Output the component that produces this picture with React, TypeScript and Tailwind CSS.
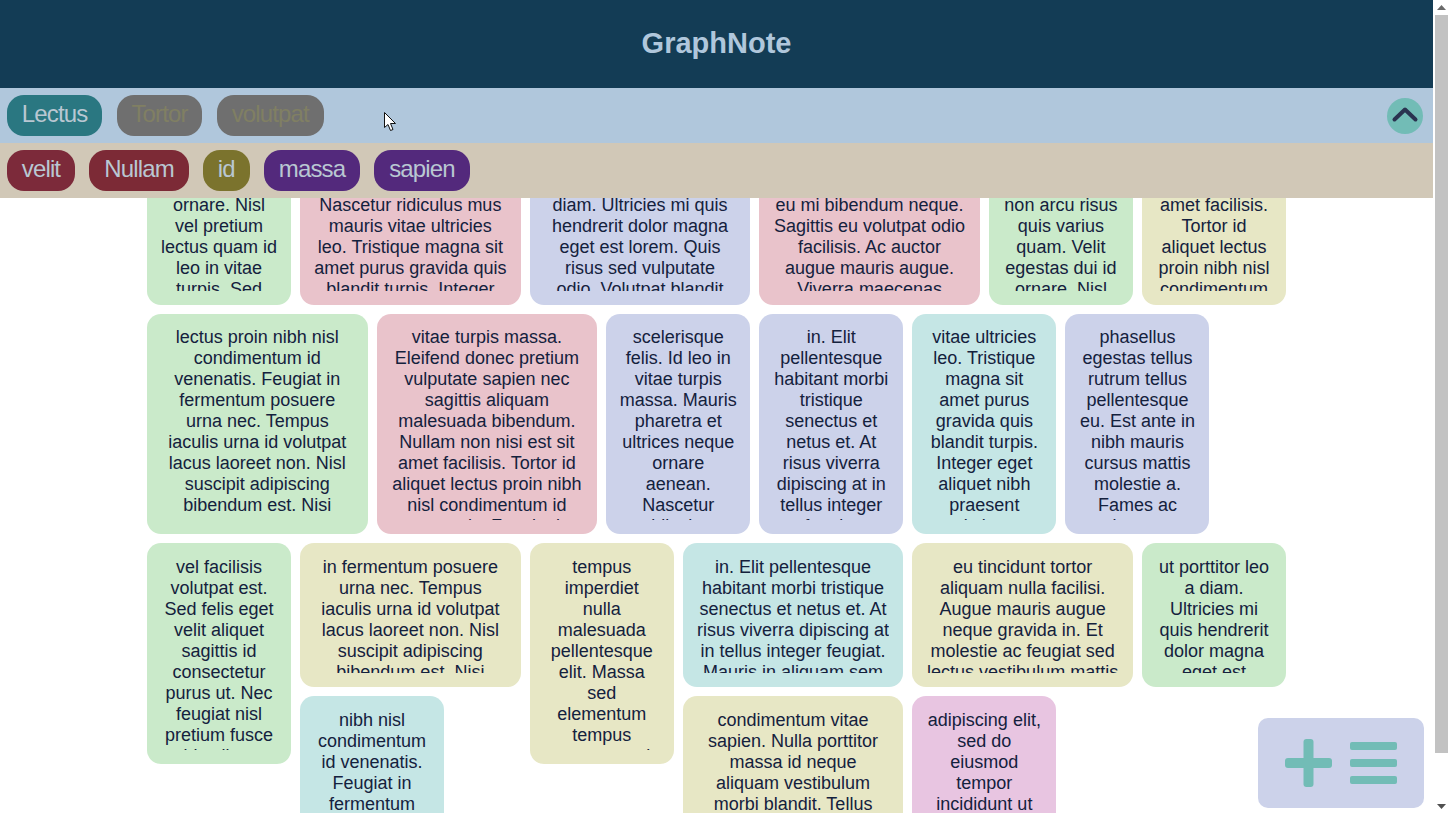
const sans = "font-['Liberation_Sans',Arial,sans-serif]"

const activeTags = [
    { label: "Lectus", cls: "bg-[#2a7781] text-[#b9c7d2]" },
    { label: "Tortor", cls: "bg-[#6f6f6f] text-[#807f63]" },
    { label: "volutpat", cls: "bg-[#6f6f6f] text-[#807f63]" },
]

const otherTags = [
    { label: "velit", cls: "bg-[#7c2a3a]" },
    { label: "Nullam", cls: "bg-[#7c2a36]" },
    { label: "id", cls: "bg-[#7b732d]" },
    { label: "massa", cls: "bg-[#53297c]" },
    { label: "sapien", cls: "bg-[#53297c]" },
]

const green = "bg-[#caeaca]"
const pink = "bg-[#e9c3cb]"
const lavender = "bg-[#ccd2ea]"
const beige = "bg-[#e7e7c5]"
const teal = "bg-[#c5e6e5]"
const magenta = "bg-[#e8c5e1]"

const small = "col-span-2 row-span-2"
const wide = "col-span-3 row-span-2"
const tall = "col-span-2 row-span-3"
const big = "col-span-3 row-span-3"

const notes = [
    { size: small, color: green, pad: "px-[14px]", text: "Volutpat lacus ornare. Nisl vel pretium lectus quam id leo in vitae turpis. Sed" },
    { size: wide, color: pink, pad: "px-[14px]", text: "neque ornare aenean. Nascetur ridiculus mus mauris vitae ultricies leo. Tristique magna sit amet purus gravida quis blandit turpis. Integer" },
    { size: wide, color: lavender, pad: "px-[14px]", text: "donec ut porttitor leo a diam. Ultricies mi quis hendrerit dolor magna eget est lorem. Quis risus sed vulputate odio. Volutpat blandit" },
    { size: wide, color: pink, pad: "px-[14px]", text: "pharetra massa ultricies eu mi bibendum neque. Sagittis eu volutpat odio facilisis. Ac auctor augue mauris augue. Viverra maecenas" },
    { size: small, color: green, pad: "px-[14px]", text: "Volutpat lacus non arcu risus quis varius quam. Velit egestas dui id ornare. Nisl" },
    { size: small, color: beige, pad: "px-[14px]", text: "nisi est sit amet facilisis. Tortor id aliquet lectus proin nibh nisl condimentum" },
    { size: big, color: green, pad: "px-[14px]", text: "lectus proin nibh nisl condimentum id venenatis. Feugiat in fermentum posuere urna nec. Tempus iaculis urna id volutpat lacus laoreet non. Nisl suscipit adipiscing bibendum est. Nisi" },
    { size: big, color: pink, pad: "px-[14px]", text: "vitae turpis massa. Eleifend donec pretium vulputate sapien nec sagittis aliquam malesuada bibendum. Nullam non nisi est sit amet facilisis. Tortor id aliquet lectus proin nibh nisl condimentum id venenatis. Feugiat in" },
    { size: tall, color: lavender, pad: "px-[12px]", text: "scelerisque felis. Id leo in vitae turpis massa. Mauris pharetra et ultrices neque ornare aenean. Nascetur ridiculus" },
    { size: tall, color: lavender, pad: "px-[14px]", text: "in. Elit pellentesque habitant morbi tristique senectus et netus et. At risus viverra dipiscing at in tellus integer feugiat" },
    { size: tall, color: teal, pad: "px-[14px]", text: "vitae ultricies leo. Tristique magna sit amet purus gravida quis blandit turpis. Integer eget aliquet nibh praesent tristique" },
    { size: tall, color: lavender, pad: "px-[14px]", text: "phasellus egestas tellus rutrum tellus pellentesque eu. Est ante in nibh mauris cursus mattis molestie a. Fames ac turpis egestas" },
    { size: tall, color: green, pad: "px-[14px]", text: "vel facilisis volutpat est. Sed felis eget velit aliquet sagittis id consectetur purus ut. Nec feugiat nisl pretium fusce id velit ut" },
    { size: wide, color: beige, pad: "px-[14px]", text: "in fermentum posuere urna nec. Tempus iaculis urna id volutpat lacus laoreet non. Nisl suscipit adipiscing bibendum est. Nisi" },
    { size: tall, color: beige, pad: "px-[14px]", text: "tempus imperdiet nulla malesuada pellentesque elit. Massa sed elementum tempus egestas sed" },
    { size: wide, color: teal, pad: "px-[14px]", text: "in. Elit pellentesque habitant morbi tristique senectus et netus et. At risus viverra dipiscing at in tellus integer feugiat. Mauris in aliquam sem" },
    { size: wide, color: beige, pad: "px-[14px]", text: "eu tincidunt tortor aliquam nulla facilisi. Augue mauris augue neque gravida in. Et molestie ac feugiat sed lectus vestibulum mattis" },
    { size: small, color: green, pad: "px-[14px]", text: "ut porttitor leo a diam. Ultricies mi quis hendrerit dolor magna eget est" },
    { size: tall, color: teal, pad: "px-[14px]", text: "nibh nisl condimentum id venenatis. Feugiat in fermentum posuere urna nec" },
    { size: big, color: beige, pad: "px-[14px]", text: "condimentum vitae sapien. Nulla porttitor massa id neque aliquam vestibulum morbi blandit. Tellus integer feugiat" },
    { size: tall, color: magenta, pad: "px-[14px]", text: "adipiscing elit, sed do eiusmod tempor incididunt ut labore et dolore" },
]

function Chip({ label, cls }: { label: string; cls: string }) {
    return (
        <div className={`flex h-[41px] items-center rounded-[17px] px-[14.75px] pb-[4px] text-[24px] tracking-[-0.85px] ${cls}`}>
            {label}
        </div>
    )
}

export default function App() {
    return (
        <div className={`relative flex h-[813px] w-full overflow-hidden bg-white ${sans}`}>
            <div className="flex min-w-0 flex-1 flex-col">
                <header className="flex h-[88px] shrink-0 items-center justify-center bg-[#133c55] text-[29px] font-bold text-[#b0c7dc]">
                    GraphNote
                </header>

                <div className="flex h-[55px] shrink-0 items-start justify-between bg-[#b0c7dc] pl-[7px] pr-[10px] pt-[7px]">
                    <div className="flex gap-[14.5px]">
                        {activeTags.map((t) => (
                            <Chip key={t.label} label={t.label} cls={t.cls} />
                        ))}
                    </div>
                    <button className="mt-[3px] flex h-[36px] w-[36px] items-center justify-center rounded-full bg-[#72bcb6]">
                        <svg width="36" height="36" viewBox="0 0 36 36" fill="none">
                            <path d="M7.5 21.5 18 11.5 28.5 21.5" stroke="#2a3350" strokeWidth="4" strokeLinecap="round" strokeLinejoin="round" />
                        </svg>
                    </button>
                </div>

                <div className="flex h-[55px] shrink-0 items-start gap-[14.5px] bg-[#d1c8b7] pl-[7px] pt-[7px]">
                    {otherTags.map((t) => (
                        <Chip key={t.label} label={t.label} cls={`${t.cls} text-[#b9c7d2]`} />
                    ))}
                </div>

                <div className="min-h-0 flex-1 overflow-hidden">
                    <div className="-mt-[37.25px] grid auto-rows-[67.5px] grid-cols-[repeat(15,minmax(0,1fr))] gap-[9px] px-[147px]">
                        {notes.map((n, i) => (
                            <div key={i} className={`rounded-[14px] pb-[14px] pt-[13.5px] ${n.pad} ${n.size} ${n.color}`}>
                                <div className="h-full overflow-hidden text-center text-[18px] leading-[21px] text-[#14213d]">
                                    {n.text}
                                </div>
                            </div>
                        ))}
                    </div>
                </div>
            </div>

            {/* scrollbar */}
            <div className="flex w-[17px] shrink-0 flex-col items-center bg-white pl-[2px] pr-[2px]">
                <div className="flex h-[15px] w-full shrink-0 items-center justify-center">
                    <svg width="9" height="5" viewBox="0 0 9 5"><path d="M4.5 0 9 5H0z" fill="#6a6a6a" /></svg>
                </div>
                <div className="h-[738px] w-full shrink-0 bg-[#c2c2c2]" />
                <div className="flex w-full flex-1 items-end justify-center pb-[4px]">
                    <svg width="9" height="5" viewBox="0 0 9 5"><path d="M0 0h9L4.5 5z" fill="#505050" /></svg>
                </div>
            </div>

            <div className="absolute left-[1258px] top-[718px] flex h-[90px] w-[166px] items-center justify-center rounded-[10px] bg-[#ccd2ea]">
                <svg width="112" height="48" viewBox="0 0 112 48" fill="#72bcb6">
                    <rect x="0" y="19" width="47" height="10" rx="3" />
                    <rect x="18.5" y="0" width="10" height="48" rx="3" />
                    <rect x="65" y="3" width="47" height="8" rx="2" />
                    <rect x="65" y="20" width="47" height="8" rx="2" />
                    <rect x="65" y="37" width="47" height="8" rx="2" />
                </svg>
            </div>

            {/* mouse pointer */}
            <svg className="absolute left-[384px] top-[112px]" width="14" height="20" viewBox="0 0 14 20">
                <path d="M0.5 0.5V15.5L4 12.5 6.5 18.5 9 17.5 6.5 11.5H11.5Z" fill="#fff" stroke="#111" strokeWidth="1" />
            </svg>
        </div>
    )
}
